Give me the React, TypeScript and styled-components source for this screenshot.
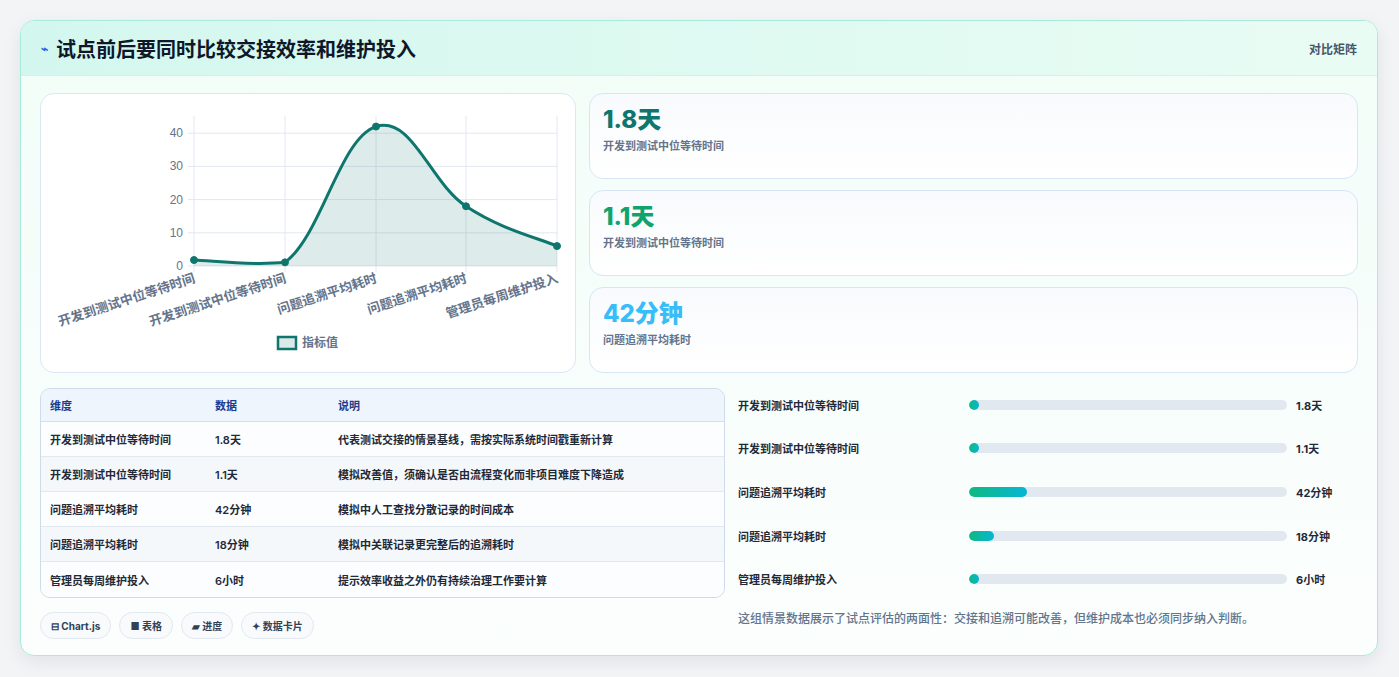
import React from "react";
import styled, { createGlobalStyle } from "styled-components";

const Global = createGlobalStyle`
  html, body { margin: 0; padding: 0; background: #f3f4f6; }
  body { font-family: Inter, "Noto Sans CJK SC", sans-serif; }
  * { box-sizing: border-box; }
`;

const Page = styled.div`
  width: 1399px; height: 677px; padding: 20px 21px 20px 20px;
  background: #f3f4f6;
`;
const Card = styled.div`
  height: 636px; border: 1px solid #a7ecd9; border-radius: 14px; overflow: hidden;
  background: linear-gradient(180deg, #f2fdf8 0%, #fbfefd 100%);
  box-shadow: 0 6px 18px rgba(15, 23, 42, 0.08);
`;
const Header = styled.div`
  height: 55px; display: flex; align-items: center; justify-content: space-between;
  padding: 0 20px; border-bottom: 1px solid #d5eef0;
  background: linear-gradient(90deg, #d3f7ee 0%, #e9fcf4 100%);
`;
const Title = styled.h1`
  margin: 0; font-size: 20px; font-weight: 700; color: #0f172a;
  display: flex; align-items: center; gap: 8px;
`;
const HeaderTag = styled.span` font-size: 12px; color: #475569; font-weight: 600; `;
const Body = styled.div` padding: 17px 19px 0 19px; display: flex; flex-direction: column; gap: 15px; `;
const TopGrid = styled.div` display: grid; grid-template-columns: 536px 1fr; gap: 13px; `;
const Panel = styled.div`
  background: #fff; border: 1px solid #dbe7f5; border-radius: 14px; height: 280px;
`;
const Stats = styled.div` display: flex; flex-direction: column; gap: 11px; `;
const Stat = styled.div`
  height: 86px; border: 1px solid #d7e6f5; border-radius: 14px; padding: 12px 13px;
  background: linear-gradient(180deg, #f8fafd 0%, #ffffff 100%);
`;
const StatValue = styled.div<{ $c: string }>`
  font-size: 24px; font-weight: 800; color: ${p => p.$c}; line-height: 28px;
`;
const StatLabel = styled.div` font-size: 11px; color: #64748b; font-weight: 600; margin-top: 3px; `;
const BottomGrid = styled.div` display: grid; grid-template-columns: 685px 1fr; gap: 13px; `;
const Left = styled.div` display: flex; flex-direction: column; gap: 14px; `;
const Table = styled.table`
  width: 100%; border-collapse: separate; border-spacing: 0; border: 1px solid #cfdbe8;
  border-radius: 10px; overflow: hidden; font-size: 11px; font-weight: 600;
  th { background: #eef5fd; color: #1e3a8a; text-align: left; height: 33px; padding: 0 9px; font-weight: 700; border-bottom: 1px solid #d5e0ec; }
  td { height: 35px; padding: 0 9px; color: #1f2937; border-bottom: 1px solid #e2e8f0; }
  tr:nth-child(odd) td { background: #fbfdfe; }
  tr:nth-child(even) td { background: #f5f8fb; }
  tr:last-child td { border-bottom: none; }
`;
const Chips = styled.div` display: flex; gap: 8px; `;
const Chip = styled.span`
  height: 27px; padding: 0 10px; border: 1px solid #e2e8f0; border-radius: 14px;
  background: #f8fafc; font-size: 10px; font-weight: 700; color: #334155;
  display: inline-flex; align-items: center; gap: 3px;
`;
const Right = styled.div` display: flex; flex-direction: column; margin-top: -5px; `;
const BarRow = styled.div`
  height: 43.6px; display: grid; grid-template-columns: 231px 318px 1fr; align-items: center; gap: 0;
`;
const BarLabel = styled.span` font-size: 11px; font-weight: 600; color: #1f2937; `;
const Track = styled.div` height: 10px; border-radius: 5px; background: #e2e8f0; overflow: hidden; `;
const Fill = styled.div` height: 100%; border-radius: 5px; background: linear-gradient(90deg, #10b981, #06b6d4); `;
const BarVal = styled.span` font-size: 11px; font-weight: 700; color: #1f2937; padding-left: 9px; `;
const Note = styled.p` margin: 8px 0 0; font-size: 12px; color: #64748b; font-weight: 500; `;

const labels = ["开发到测试中位等待时间", "开发到测试中位等待时间", "问题追溯平均耗时", "问题追溯平均耗时", "管理员每周维护投入"];
const vals = [1.8, 1.1, 42, 18, 6];

function Chart() {
  const xs = [153, 244, 335, 425, 516];
  const y = (v: number) => 172 - v * 3.32;
  const pts = xs.map((x, i) => [x, y(vals[i])]);
  let d = `M${pts[0][0]},${pts[0][1]}`;
  for (let i = 0; i < pts.length - 1; i++) {
    const p0 = pts[i - 1] || pts[i], p1 = pts[i], p2 = pts[i + 1], p3 = pts[i + 2] || p2;
    const t = 0.2;
    const c1 = [p1[0] + (p2[0] - p0[0]) * t, p1[1] + (p2[1] - p0[1]) * t];
    const c2 = [p2[0] - (p3[0] - p1[0]) * t, p2[1] - (p3[1] - p1[1]) * t];
    d += ` C${c1[0]},${Math.min(c1[1], 172)} ${c2[0]},${Math.min(c2[1], 172)} ${p2[0]},${p2[1]}`;
  }
  return (
    <svg width="534" height="278" viewBox="0 0 534 278" style={{ display: "block" }}>
      {[0, 10, 20, 30, 40].map(v => (
        <g key={v}>
          <line x1={147} x2={516} y1={y(v)} y2={y(v)} stroke="#e2e8f0" />
          <text x={142} y={y(v) + 4} fontSize="12" fill="#64748b" textAnchor="end" fontFamily="Liberation Sans, sans-serif">{v}</text>
        </g>
      ))}
      {xs.map(x => <line key={x} x1={x} x2={x} y1={22} y2={178} stroke="#e2e8f0" />)}
      <path d={`${d} L516,172 L153,172 Z`} fill="rgba(15,118,110,0.14)" />
      <path d={d} fill="none" stroke="#0f766e" strokeWidth="3" />
      {pts.map(([x, yy], i) => <circle key={i} cx={x} cy={yy} r="3.5" fill="#0f766e" stroke="#0f766e" />)}
      {xs.map((x, i) => (
        <text key={i} x={x + 2} y={188} fontSize="13" fontWeight="600" fill="#64748b" textAnchor="end"
          transform={`rotate(-18 ${x + 2} 188)`}>{labels[i]}</text>
      ))}
      <rect x={237} y={243} width={18} height={12} fill="#dbe9e8" stroke="#0f766e" strokeWidth="2.5" />
      <text x={261} y={253} fontSize="12" fill="#64748b" fontWeight="600">指标值</text>
    </svg>
  );
}

const rows = [
  ["开发到测试中位等待时间", "1.8天", "代表测试交接的情景基线，需按实际系统时间戳重新计算"],
  ["开发到测试中位等待时间", "1.1天", "模拟改善值，须确认是否由流程变化而非项目难度下降造成"],
  ["问题追溯平均耗时", "42分钟", "模拟中人工查找分散记录的时间成本"],
  ["问题追溯平均耗时", "18分钟", "模拟中关联记录更完整后的追溯耗时"],
  ["管理员每周维护投入", "6小时", "提示效率收益之外仍有持续治理工作要计算"],
];
const bars = [["1.8天", 1.8], ["1.1天", 1.1], ["42分钟", 42], ["18分钟", 18], ["6小时", 6]] as const;

export default function App() {
  return (
    <Page>
      <Global />
      <Card>
        <Header>
          <Title><span style={{ color: "#2563eb", fontSize: 12 }}>⌁</span>试点前后要同时比较交接效率和维护投入</Title>
          <HeaderTag>对比矩阵</HeaderTag>
        </Header>
        <Body>
          <TopGrid>
            <Panel><Chart /></Panel>
            <Stats>
              <Stat><StatValue $c="#0f766e">1.8天</StatValue><StatLabel>开发到测试中位等待时间</StatLabel></Stat>
              <Stat><StatValue $c="#10a36e">1.1天</StatValue><StatLabel>开发到测试中位等待时间</StatLabel></Stat>
              <Stat><StatValue $c="#38bdf8">42分钟</StatValue><StatLabel>问题追溯平均耗时</StatLabel></Stat>
            </Stats>
          </TopGrid>
          <BottomGrid>
            <Left>
              <Table>
                <thead><tr><th style={{ width: 165 }}>维度</th><th style={{ width: 123 }}>数据</th><th>说明</th></tr></thead>
                <tbody>{rows.map((r, i) => <tr key={i}>{r.map((c, j) => <td key={j}>{c}</td>)}</tr>)}</tbody>
              </Table>
              <Chips>
                <Chip>⊟ Chart.js</Chip><Chip>■ 表格</Chip><Chip>▰ 进度</Chip><Chip>✦ 数据卡片</Chip>
              </Chips>
            </Left>
            <Right>
              {bars.map(([t, v], i) => (
                <BarRow key={i}>
                  <BarLabel>{labels[i]}</BarLabel>
                  <Track><Fill style={{ width: `${Math.max(3.2, (v / 230) * 100)}%` }} /></Track>
                  <BarVal>{t}</BarVal>
                </BarRow>
              ))}
              <Note>这组情景数据展示了试点评估的两面性：交接和追溯可能改善，但维护成本也必须同步纳入判断。</Note>
            </Right>
          </BottomGrid>
        </Body>
      </Card>
    </Page>
  );
}
